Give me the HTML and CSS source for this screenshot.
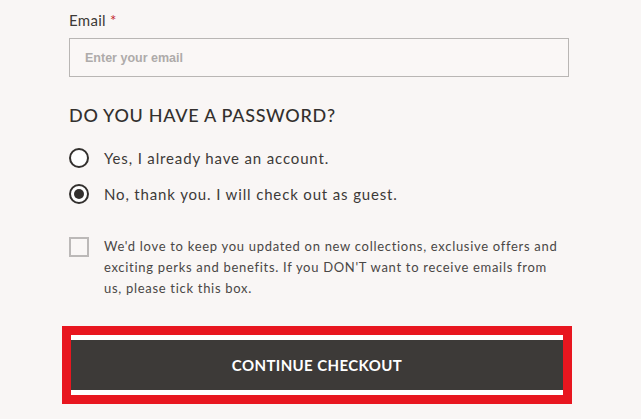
FILE: index.html
```html
<!DOCTYPE html>
<html lang="en">
  <head>
    <meta charset="utf-8" />
    <title>Checkout</title>
    <link rel="stylesheet" href="styles.css">
  </head>
  <body>
    <form class="checkout">
      <label class="field-label" for="email">Email <span class="req">*</span></label>
      <input class="field-input" id="email" type="email" placeholder="Enter your email" />

      <h2 class="section-title">DO YOU HAVE A PASSWORD?</h2>

      <label class="radio-row">
        <span class="radio"></span>
        <span>Yes, I already have an account.</span>
      </label>
      <label class="radio-row">
        <span class="radio checked"></span>
        <span>No, thank you. I will check out as guest.</span>
      </label>

      <label class="check-row">
        <span class="checkbox"></span>
        <span class="check-text">We'd love to keep you updated on new collections, exclusive offers and exciting perks and benefits. If you DON'T want to receive emails from us, please tick this box.</span>
      </label>

      <div class="highlight">
        <button class="submit" type="button">CONTINUE CHECKOUT</button>
      </div>
    </form>
  </body>
</html>
```

FILE: styles.css
```css
* {
  margin: 0;
  padding: 0;
  box-sizing: border-box;
}
html,
body {
  background: #f9f6f5;
  color: #3d3a38;
  font-family: "Lato", sans-serif;
}
.checkout {
  width: 504px;
  margin-left: 69px;
  padding-top: 10px;
  display: flex;
  flex-direction: column;
}
.field-label {
  font-size: 15px;
  line-height: 20px;
  letter-spacing: 0.3px;
}
.req {
  color: #c3262c;
}
.field-input {
  margin-top: 8px;
  width: 500px;
  height: 39px;
  border: 1px solid #b9b6b4;
  background: #faf7f6;
  padding: 0 15px;
  font: 600 12.5px "Liberation Sans", Arial, sans-serif;
  outline: none;
}
.field-input::placeholder {
  color: #aeabaa;
}
.section-title {
  margin-top: 27px;
  font-size: 18px;
  font-weight: 500;
  line-height: 22px;
  letter-spacing: 0.7px;
  color: #33302e;
}
.radio-row {
  margin-top: 22px;
  display: flex;
  align-items: center;
  gap: 15px;
  font-size: 15px;
  line-height: 20px;
  letter-spacing: 0.85px;
}
.radio-row + .radio-row {
  margin-top: 16px;
}
.radio {
  width: 20px;
  height: 20px;
  border: 2px solid #33302e;
  border-radius: 50%;
  background: #fff;
  display: flex;
  align-items: center;
  justify-content: center;
}
.radio.checked::after {
  content: "";
  width: 10px;
  height: 10px;
  border-radius: 50%;
  background: #33302e;
}
.check-row {
  margin-top: 33px;
  display: flex;
  align-items: flex-start;
  gap: 15px;
}
.checkbox {
  flex: none;
  width: 20px;
  height: 20px;
  border: 2px solid #bcb9b8;
  background: #faf7f6;
}
.check-text {
  max-width: 458px;
  font-size: 13px;
  line-height: 21px;
  letter-spacing: 0.7px;
  color: #4a4745;
  margin-top: -1px;
}
.highlight {
  margin-top: 27px;
  margin-left: -7px;
  width: 510px;
  border: 9px solid #e8161f;
  background: #fff;
  padding: 5px 0;
}
.submit {
  display: block;
  width: 100%;
  height: 50px;
  border: none;
  background: #3d3a38;
  color: #fff;
  font: 700 15px "Lato", sans-serif;
  letter-spacing: 0.4px;
  cursor: pointer;
}
```
